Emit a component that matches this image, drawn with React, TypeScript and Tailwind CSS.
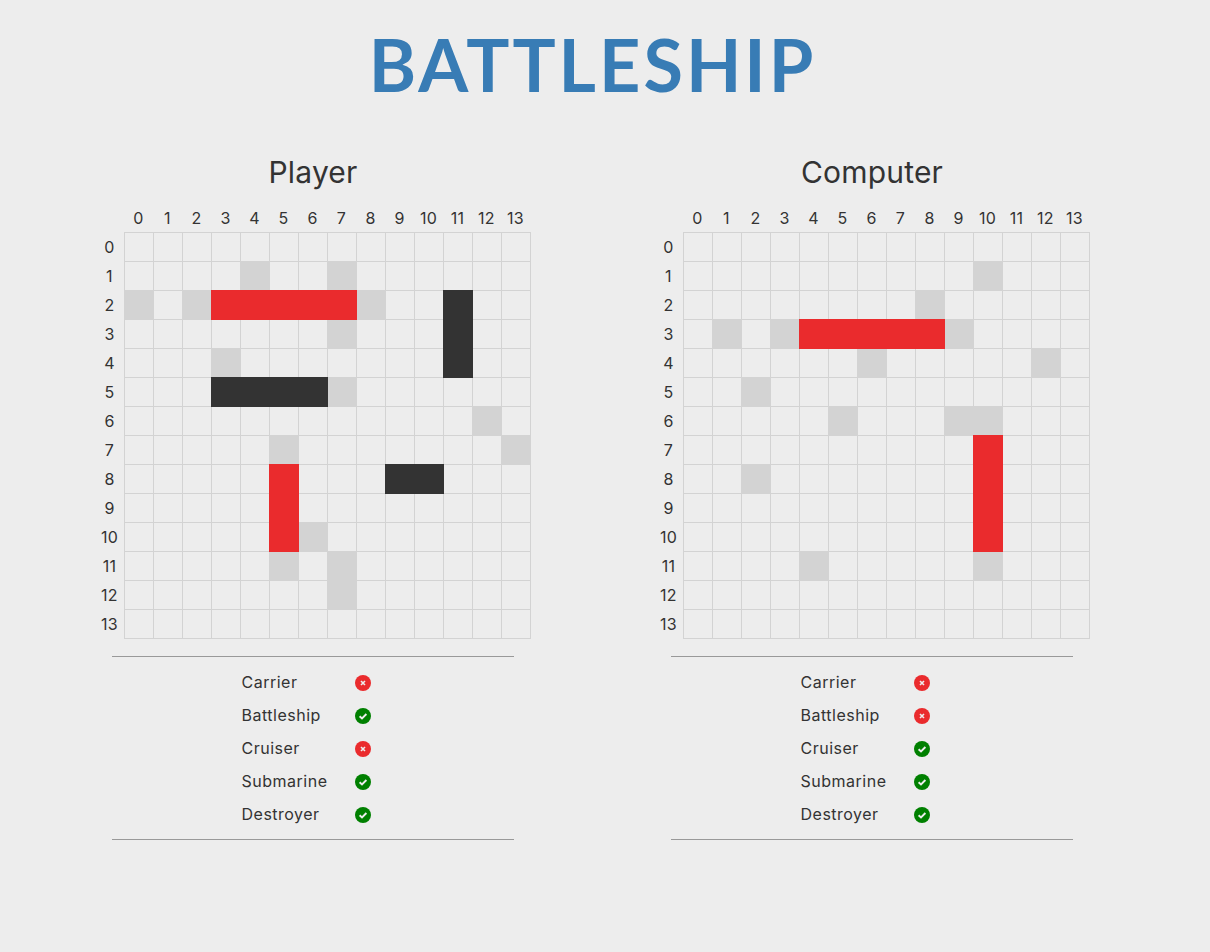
const labels = Array.from({ length: 14 }, (_, i) => i);

// 'x' = miss, 'h' = hit, 's' = ship; keyed by "row-col"
function makeBoard(misses: number[][], hits: number[][], ships: number[][]) {
  const board: Record<string, string> = {};
  misses.forEach(([r, c]) => (board[`${r}-${c}`] = 'x'));
  hits.forEach(([r, c]) => (board[`${r}-${c}`] = 'h'));
  ships.forEach(([r, c]) => (board[`${r}-${c}`] = 's'));
  return board;
}

const playerBoard = makeBoard(
  [[1, 4], [1, 7], [2, 0], [2, 2], [2, 8], [3, 7], [4, 3], [5, 7], [6, 12], [7, 5], [7, 13], [10, 6], [11, 5], [11, 7], [12, 7]],
  [[2, 3], [2, 4], [2, 5], [2, 6], [2, 7], [8, 5], [9, 5], [10, 5]],
  [[2, 11], [3, 11], [4, 11], [5, 3], [5, 4], [5, 5], [5, 6], [8, 9], [8, 10]]
);

const computerBoard = makeBoard(
  [[1, 10], [2, 8], [3, 1], [3, 3], [3, 9], [4, 6], [4, 12], [5, 2], [6, 5], [6, 9], [6, 10], [8, 2], [11, 4], [11, 10]],
  [[3, 4], [3, 5], [3, 6], [3, 7], [3, 8], [7, 10], [8, 10], [9, 10], [10, 10]],
  []
);

const playerFleet = [
  { name: 'Carrier', alive: false },
  { name: 'Battleship', alive: true },
  { name: 'Cruiser', alive: false },
  { name: 'Submarine', alive: true },
  { name: 'Destroyer', alive: true },
];

const computerFleet = [
  { name: 'Carrier', alive: false },
  { name: 'Battleship', alive: false },
  { name: 'Cruiser', alive: true },
  { name: 'Submarine', alive: true },
  { name: 'Destroyer', alive: true },
];

function StatusIcon({ alive }: { alive: boolean }) {
  if (alive) {
    return (
      <svg width="16" height="16" viewBox="0 0 16 16">
        <circle cx="8" cy="8" r="8" fill="#008000" />
        <path d="M4.6 8.2 L7 10.5 L11.4 6" fill="none" stroke="#ededed" strokeWidth="1.9" />
      </svg>
    );
  }
  return (
    <svg width="16" height="16" viewBox="0 0 16 16">
      <circle cx="8" cy="8" r="8" fill="#ea2b2d" />
      <path d="M6 6 L10 10 M10 6 L6 10" fill="none" stroke="#ededed" strokeWidth="1.6" />
    </svg>
  );
}

function Cell({ state }: { state?: string }) {
  if (state === 'h') return <div className="relative z-10 w-[30px] h-[30px] bg-[#ea2b2d]" />;
  if (state === 's') return <div className="relative z-10 w-[30px] h-[30px] bg-[#333333]" />;
  if (state === 'x') return <div className="w-[30px] h-[30px] bg-[#d3d3d3]" />;
  return <div className="w-[30px] h-[30px] border border-[#d3d3d3]" />;
}

function Board({ board }: { board: Record<string, string> }) {
  return (
    <div className="flex justify-center">
      <div className="shrink-0 grid grid-cols-[29px_repeat(14,29px)] grid-rows-[29px_repeat(14,29px)] w-[436px] h-[436px] text-[16px] leading-[31px] tracking-[0.3px] text-center text-[#333333]">
        <div />
        {labels.map((c) => (
          <div key={c}>{c}</div>
        ))}
        {labels.map((r) => (
          <div key={r} className="contents">
            <div>{r}</div>
            {labels.map((c) => (
              <Cell key={c} state={board[`${r}-${c}`]} />
            ))}
          </div>
        ))}
      </div>
    </div>
  );
}

function Side({ title, board, fleet }: { title: string; board: Record<string, string>; fleet: { name: string; alive: boolean }[] }) {
  return (
    <section className="w-[402px]">
      <h2 className="text-[30px] leading-[44px] tracking-[0.2px] text-center text-[#333333]">{title}</h2>
      <div className="mt-[9px]">
        <Board board={board} />
      </div>
      <div className="mt-[17px] border-t border-b border-[#999999] h-[184px] pt-[9px]">
        <div className="w-[143px] mx-auto">
          {fleet.map((ship) => (
            <div key={ship.name} className="flex items-center h-[33px] text-[16px] tracking-[0.5px] text-[#333333]">
              <span className="w-[113.5px] -mt-[2px]">{ship.name}</span>
              <StatusIcon alive={ship.alive} />
            </div>
          ))}
        </div>
      </div>
    </section>
  );
}

export default function App() {
  return (
    <div className="min-h-[952px] bg-[#ededed] font-['Inter',sans-serif]">
      <div className="w-[961px] ml-[112px]">
        <h1 className="pt-[21px] h-[150px] font-['Lato',sans-serif] text-[72px] leading-[87px] font-bold tracking-[3px] text-center text-[#387cb5]">
          BATTLESHIP
        </h1>
        <div className="flex justify-between">
          <Side title="Player" board={playerBoard} fleet={playerFleet} />
          <Side title="Computer" board={computerBoard} fleet={computerFleet} />
        </div>
      </div>
    </div>
  );
}
